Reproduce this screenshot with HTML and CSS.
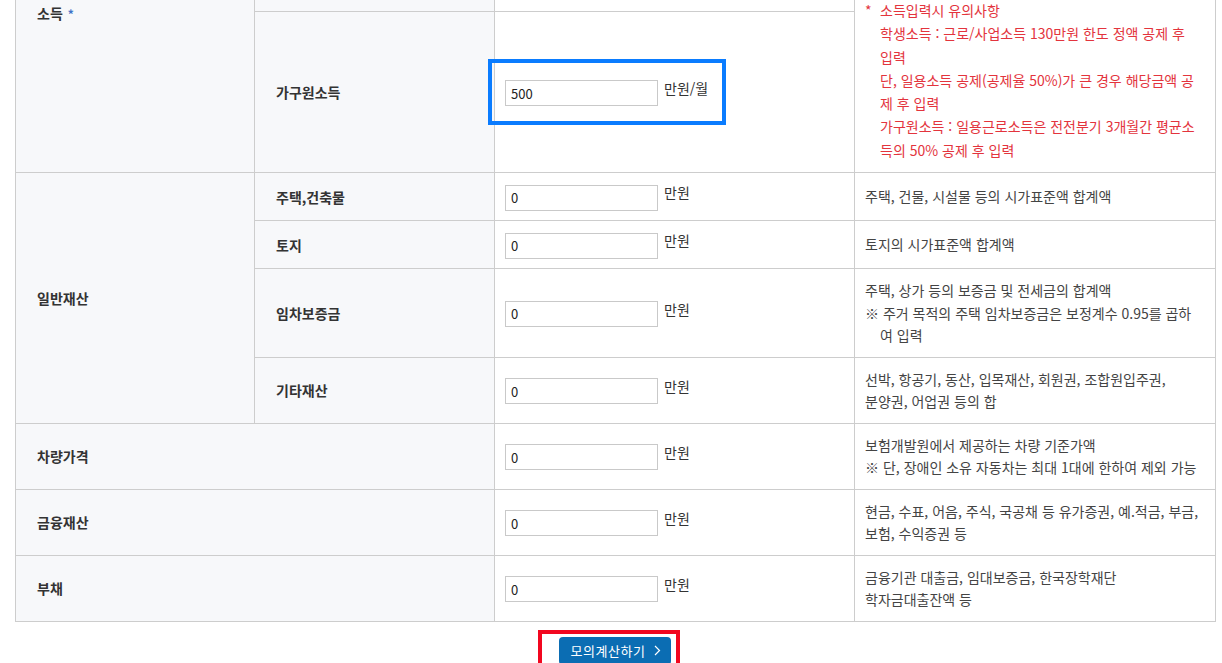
FILE: index.html
```html
<!DOCTYPE html>
<html lang="ko">

<head>
    <meta charset="UTF-8">
    <meta name="viewport" content="width=device-width, initial-scale=1.0">
    <title>모의계산</title>
    <link rel="stylesheet" href="styles.css">
</head>

<body>
    <div class="wrap">
        <table class="calc-table">
            <colgroup>
                <col class="col-th1">
                <col class="col-th2">
                <col class="col-input">
                <col class="col-desc">
            </colgroup>
            <tbody>
                <tr class="row-sm">
                    <th rowspan="4">소득 <span class="req">*</span></th>
                    <th>근로소득</th>
                    <td class="td-input"><input type="text" value="0"><span class="unit">만원/월</span></td>
                    <td rowspan="4" class="td-note">
                        <p class="note-title"><span class="mark">*</span>소득입력시 유의사항</p>
                        <p class="note-line keep">학생소득 : 근로/사업소득 130만원 한도 정액 공제 후 입력</p>
                        <p class="note-line">단, 일용소득 공제(공제율 50%)가 큰 경우 해당금액 공제 후 입력</p>
                        <p class="note-line">가구원소득 : 일용근로소득은 전전분기 3개월간 평균소득의 50% 공제 후 입력</p>
                    </td>
                </tr>
                <tr class="row-sm">
                    <th>사업소득</th>
                    <td class="td-input"><input type="text" value="0"><span class="unit">만원/월</span></td>
                </tr>
                <tr class="row-md">
                    <th>학생소득</th>
                    <td class="td-input"><input type="text" value="0"><span class="unit">만원/월</span></td>
                </tr>
                <tr class="row-tall">
                    <th>가구원소득</th>
                    <td class="td-input"><span class="hl"><input type="text" value="500"><span class="unit">만원/월</span></span></td>
                </tr>

                <tr class="row-sm">
                    <th rowspan="4">일반재산</th>
                    <th>주택,건축물</th>
                    <td class="td-input"><input type="text" value="0"><span class="unit">만원</span></td>
                    <td class="td-desc">주택, 건물, 시설물 등의 시가표준액 합계액</td>
                </tr>
                <tr class="row-sm">
                    <th>토지</th>
                    <td class="td-input"><input type="text" value="0"><span class="unit">만원</span></td>
                    <td class="td-desc">토지의 시가표준액 합계액</td>
                </tr>
                <tr>
                    <th>임차보증금</th>
                    <td class="td-input"><input type="text" value="0"><span class="unit">만원</span></td>
                    <td class="td-desc">
                        주택, 상가 등의 보증금 및 전세금의 합계액
                        <p class="ref">※ 주거 목적의 주택 임차보증금은 보정계수 0.95를 곱하여 입력</p>
                    </td>
                </tr>
                <tr>
                    <th>기타재산</th>
                    <td class="td-input"><input type="text" value="0"><span class="unit">만원</span></td>
                    <td class="td-desc">선박, 항공기, 동산, 입목재산, 회원권, 조합원입주권,<br>분양권, 어업권 등의 합</td>
                </tr>

                <tr>
                    <th colspan="2">차량가격</th>
                    <td class="td-input"><input type="text" value="0"><span class="unit">만원</span></td>
                    <td class="td-desc">
                        보험개발원에서 제공하는 차량 기준가액
                        <p class="ref">※ 단, 장애인 소유 자동차는 최대 1대에 한하여 제외 가능</p>
                    </td>
                </tr>
                <tr>
                    <th colspan="2">금융재산</th>
                    <td class="td-input"><input type="text" value="0"><span class="unit">만원</span></td>
                    <td class="td-desc">현금, 수표, 어음, 주식, 국공채 등 유가증권, 예.적금, 부금, 보험, 수익증권 등</td>
                </tr>
                <tr>
                    <th colspan="2">부채</th>
                    <td class="td-input"><input type="text" value="0"><span class="unit">만원</span></td>
                    <td class="td-desc">금융기관 대출금, 임대보증금, 한국장학재단<br>학자금대출잔액 등</td>
                </tr>
            </tbody>
        </table>

        <div class="btn-area">
            <span class="btn-mark">
                <button type="button" class="btn-calc">모의계산하기
                    <svg width="7" height="11" viewBox="0 0 7 11"><path d="M1 1l4.5 4.5L1 10" fill="none" stroke="#fff" stroke-width="1.2"/></svg>
                </button>
            </span>
        </div>
    </div>
</body>

</html>
```

FILE: styles.css
```css
body {
    margin: 0;
    background: #fff;
    font-family: "Noto Sans CJK KR", "Noto Sans", sans-serif;
    font-size: 14px;
    color: #333;
}
.wrap { padding: 0 0 0 15px; margin-top: -148px; }
p { margin: 0; }

.calc-table {
    width: 1200px;
    table-layout: fixed;
    border-collapse: collapse;
    border: 1px solid #cdcdcd;
}
.col-th1 { width: 239px; }
.col-th2 { width: 240px; }
.col-input { width: 360px; }
.col-desc { width: 361px; }
.calc-table th, .calc-table td {
    border: 1px solid #cdcdcd;
    vertical-align: middle;
}
.calc-table th {
    background: #f7f8fa;
    text-align: left;
    font-weight: bold;
    padding: 0 20px 0 21px;
    color: #333;
}
.req { color: #3f72c8; font-size: 12px; margin-left: 1px; }

.row-sm { height: 48px; }
.row-md { height: 63px; }
.row-tall { height: 161px; }

.td-input { padding: 0 10px; white-space: nowrap; }
.td-input input {
    box-sizing: border-box;
    width: 153px;
    height: 26px;
    border: 1px solid #c9c9c9;
    padding: 0 5px;
    font-family: inherit;
    font-size: 13px;
    color: #222;
    vertical-align: middle;
}
.unit { margin-left: 6px; vertical-align: 3px; }

.hl { position: relative; display: inline-block; }
.hl::after {
    content: "";
    position: absolute;
    left: -17px; top: -19px; right: -18px; bottom: -19px;
    border: 4px solid #0a7cff;
}

.td-desc { padding: 10px 12px 10px 10px; line-height: 22.5px; color: #444; }
.ref { padding-left: 15px; text-indent: -15px; }

.td-note {
    vertical-align: bottom !important;
    padding: 10px 12px 10px 10px;
    line-height: 23.3px;
    color: #e3343d;
}
.note-line { padding-left: 15px; }
.note-line.keep { word-break: keep-all; }
.mark { display: inline-block; width: 15px; }

.btn-area { text-align: center; width: 1200px; margin-top: 15px; }
.btn-mark { position: relative; display: inline-block; }
.btn-mark::after {
    content: "";
    position: absolute;
    left: -21px; top: -7px; right: -9px; bottom: -7px;
    border: 4px solid #f2071f;
}
.btn-calc {
    display: inline-flex;
    align-items: center;
    gap: 9px;
    height: 28px;
    padding: 0 10px 0 12px;
    border: none;
    border-radius: 4px;
    background: #0b6db3;
    color: #fff;
    font-family: inherit;
    font-size: 13px;
    letter-spacing: 0.5px;
    cursor: pointer;
}
```
